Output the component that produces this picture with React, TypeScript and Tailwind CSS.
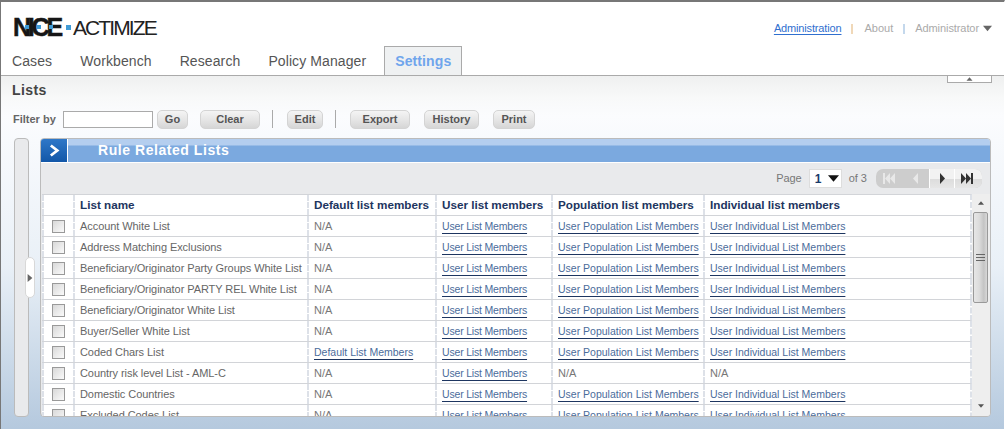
const tabs = ['Cases', 'Workbench', 'Research', 'Policy Manager'];

const toolbarButtons = [
  { label: 'Go', className: 'w-[31px] ml-[4px]' },
  { label: 'Clear', className: 'w-[60px] ml-[12px]' },
  { label: 'sep', className: 'ml-[12px]' },
  { label: 'Edit', className: 'w-[36px] ml-[14px]' },
  { label: 'sep', className: 'ml-[12px]' },
  { label: 'Export', className: 'w-[60px] ml-[14px]' },
  { label: 'History', className: 'w-[55px] ml-[14px]' },
  { label: 'Print', className: 'w-[42px] ml-[14px]' }
];

const rows = [
  { name: 'Account White List', def: false, pop: true, ind: true },
  { name: 'Address Matching Exclusions', def: false, pop: true, ind: true },
  { name: 'Beneficiary/Originator Party Groups White List', def: false, pop: true, ind: true },
  { name: 'Beneficiary/Originator PARTY REL White List', def: false, pop: true, ind: true },
  { name: 'Beneficiary/Originator White List', def: false, pop: true, ind: true },
  { name: 'Buyer/Seller White List', def: false, pop: true, ind: true },
  { name: 'Coded Chars List', def: true, pop: true, ind: true },
  { name: 'Country risk level List - AML-C', def: false, pop: false, ind: false },
  { name: 'Domestic Countries', def: false, pop: true, ind: true },
  { name: 'Excluded Codes List', def: false, pop: true, ind: true }
];

const grid = 'grid grid-cols-[31px_234px_128px_116px_152px_1fr] border-r-2 [border-right-style:dashed] border-r-[#dde1e8]';
const cell = 'border-l-2 border-dashed border-l-[#dde1e8] pl-[5px] flex items-center overflow-hidden whitespace-nowrap';

const Triangle = ({ dir, className }: { dir: 'up' | 'down' | 'right'; className: string }) => {
  const points = { up: '0,8 5,2 10,8', down: '0,2 10,2 5,8', right: '2,0 8,5 2,10' }[dir];
  return (
    <svg viewBox="0 0 10 10" className={className} fill="currentColor">
      <polygon points={points} />
    </svg>
  );
};

const PagerIcon = ({ d, width }: { d: string; width: number }) => (
  <svg viewBox={`0 0 ${width} 11`} width={width} height={11} fill="currentColor">
    <path d={d} />
  </svg>
);

const Member = ({ label, className = '' }: { label: string; className?: string }) => (
  <span className={`pt-[2px] text-[10.5px] text-[#4b6c9b] underline decoration-[#1d3560] underline-offset-[3px] ${className}`}>{label}</span>
);

const Na = () => <span className="text-[#777]">N/A</span>;

export default function App() {
  return (
    <div className="w-[1005px] h-[429px] flex flex-col overflow-hidden border-t-2 border-l border-r border-t-[#777] border-l-[#777] border-r-white font-['Liberation_Sans',Arial,sans-serif]">
      {/* Header */}
      <header className="h-[74px] shrink-0 bg-white border-b border-[#aaa] flex flex-col">
        <div className="h-[44px] flex justify-between pl-[12px] pr-[12px]">
          {/* Logo */}
          <div className="flex items-center h-[28px] mt-[11px]">
            <div className="relative text-[25px] leading-[25px] font-bold tracking-[-3.2px] text-[#161616] [-webkit-text-stroke:0.5px_#161616]">
              NICE
              <span className="absolute left-[12px] top-[10px] w-[4px] h-[4px] bg-[#3f9bd6]" />
              <span className="absolute left-[24px] top-[10px] w-[4px] h-[4px] bg-[#3f9bd6]" />
              <span className="absolute left-[36px] top-[10px] w-[4px] h-[4px] bg-[#3f9bd6]" />
            </div>
            <span className="w-[5px] h-[5px] ml-[6px] bg-[#3f9bd6]" />
            <span className="ml-[2px] text-[21px] leading-[25px] tracking-[-1.9px] text-[#222]">ACTIMIZE</span>
          </div>
          {/* User links */}
          <div className="flex items-center h-[14px] mt-[19.5px] text-[11px]">
            <span className="tracking-[-0.15px] text-[#2f6fcf] underline underline-offset-[2px]">Administration</span>
            <span className="w-[2px] h-[10px] ml-[10px] bg-[#f0d8b8]" />
            <span className="ml-[11px] text-[#aaa]">About</span>
            <span className="w-[2px] h-[10px] ml-[10px] bg-[#c4d8ec]" />
            <span className="ml-[10px] tracking-[-0.08px] text-[#aaa]">Administrator</span>
            <Triangle dir="down" className="w-[9px] h-[9px] ml-[4px] text-[#666]" />
          </div>
        </div>
        <nav className="h-[29px] flex items-end pl-[11px] text-[14px] tracking-[0.1px] text-[#555]">
          {tabs.map(tab => (
            <span key={tab} className="h-[29px] pt-[1px] mr-[28px] flex items-center">{tab}</span>
          ))}
          <span className="h-[29px] pt-[1px] -ml-[10.5px] pl-[10.5px] pr-[10px] flex items-center font-bold text-[#6fa5ec] bg-[#eff1f2] border-t border-l border-r border-[#aaa]">
            Settings
          </span>
        </nav>
      </header>

      {/* Page */}
      <main className="relative flex-1 pl-[11px] bg-[linear-gradient(#eff0f0_0px,#f8f9f9_22px,#fbfcfe_40px,#e9f0f7_190px,#b5c9de_352px)]">
        <button className="absolute right-[12px] top-0 w-[45px] h-[7px] bg-white border-b border-l border-r border-[#aaa] flex items-center justify-center">
          <Triangle dir="up" className="w-[9px] h-[6px] text-[#666]" />
        </button>

        <h1 className="h-[27px] pt-[6px] text-[14px] leading-[16px] font-bold tracking-[0.4px] text-[#444]">Lists</h1>

        {/* Toolbar */}
        <div className="h-[18px] mt-[7px] flex items-center pl-[1px]">
          <span className="w-[50px] text-[11px] font-bold text-[#666]">Filter by</span>
          <input className="w-[90px] h-[17px] bg-white border border-[#aaa] outline-none" />
          {toolbarButtons.map((b, i) =>
            b.label === 'sep' ? (
              <span key={i} className={`w-px h-[18px] bg-[#aaa] ${b.className}`} />
            ) : (
              <span
                key={i}
                className={`h-[19px] flex items-center justify-center rounded-[5px] border border-[#d4d4d4] bg-[linear-gradient(#f4f4f4,#e6e6e6_50%,#d6d6d6)] text-[11px] font-bold text-[#555] ${b.className}`}
              >
                {b.label}
              </span>
            )
          )}
        </div>

        {/* Workspace */}
        <div className="relative h-[279px] mt-[10px] ml-[2px] flex">
          <div className="w-[15px] shrink-0 rounded-[4px] border border-[#bbb] bg-[#e9eaec]" />
          <span className="absolute left-[11px] top-[119px] w-[10px] h-[41px] rounded-[5px] bg-white border border-[#d8d8d8] flex items-center justify-center">
            <Triangle dir="right" className="w-[8px] h-[8px] text-[#666]" />
          </span>

          {/* Panel */}
          <section className="w-[951px] ml-[11px] rounded-[4px] border border-[#bbb] bg-[#e9eaec] flex flex-col overflow-hidden">
            <div className="h-[24px] shrink-0 flex border-b border-white bg-[linear-gradient(#b4ceef_0px,#b4ceef_6px,#7ba9df_7px)]">
              <span className="w-[27px] h-[23px] flex items-center justify-center border-r border-white bg-[linear-gradient(#2f78c8,#1257a8)] text-white">
                <svg viewBox="0 0 12 14" className="w-[11px] h-[13px]" fill="none" stroke="currentColor" strokeWidth="3">
                  <path d="M2 1.5 9 7 2 12.5" />
                </svg>
              </span>
              <span className="ml-[30px] text-[14px] leading-[22px] font-bold tracking-[0.55px] text-white">Rule Related Lists</span>
            </div>

            {/* Pager */}
            <div className="h-[31px] shrink-0 flex items-center justify-end pr-[8px] text-[11px] text-[#777]">
              <span className="tracking-[-0.1px]">Page</span>
              <span className="w-[33px] h-[19px] ml-[7px] pl-[5px] pr-[2px] flex items-center justify-between bg-white border border-[#ddd] text-[12px] font-bold text-[#1a3a6a]">
                1
                <Triangle dir="down" className="w-[11px] h-[11px] text-[#111]" />
              </span>
              <span className="ml-[7px]">of 3</span>
              <div className="w-[106px] h-[19px] ml-[9px] flex rounded-[7px] overflow-hidden bg-[#cdcdcd]">
                <span className="w-[26px] flex items-center justify-center text-[#e8e8e8]">
                  <PagerIcon width={12} d="M0 0h2v11H0z M7 0v11L2 5.5z M12 0v11L7 5.5z" />
                </span>
                <span className="w-[27px] flex items-center justify-center text-[#e8e8e8]">
                  <PagerIcon width={5} d="M5 0v11L0 5.5z" />
                </span>
                <span className="w-[25px] flex items-center justify-center border-l border-white bg-[linear-gradient(#f2f2f2,#f2f2f2_50%,#dcdcdc_50%,#e6e6e6)] text-[#333]">
                  <PagerIcon width={5} d="M0 0l5 5.5L0 11z" />
                </span>
                <span className="flex-1 flex items-center justify-center pr-[3px] border-l border-white bg-[linear-gradient(#f2f2f2,#f2f2f2_50%,#dcdcdc_50%,#e6e6e6)] text-[#333]">
                  <PagerIcon width={12} d="M0 0l5 5.5L0 11z M5 0l5 5.5L5 11z M10 0h2v11h-2z" />
                </span>
              </div>
            </div>

            {/* Table */}
            <div className="flex-1 min-h-0 flex ml-[1px] overflow-hidden">
              <div className="w-[930px] bg-white text-[11px] text-[#666]">
                <div className={`${grid} h-[22px] border-b border-b-[#d2d4d8] border-t border-t-[#d2d4d8] font-bold text-[11.7px] text-[#1d3560]`}>
                  <div className={cell} />
                  <div className={cell}>List name</div>
                  <div className={cell}>Default list members</div>
                  <div className={cell}>User list members</div>
                  <div className={cell}>Population list members</div>
                  <div className={cell}>Individual list members</div>
                </div>
                {rows.map(row => (
                  <div key={row.name} className={`${grid} h-[21px] border-b border-b-[#d2d4d8]`}>
                    <div className={`${cell} justify-center !pl-0`}>
                      <span className="w-[13px] h-[13px] border border-[#999] bg-[linear-gradient(135deg,#d8d8d8,#fafafa)]" />
                    </div>
                    <div className={`${cell} tracking-[-0.07px]`}>{row.name}</div>
                    <div className={cell}>{row.def ? <Member label="Default List Members" /> : <Na />}</div>
                    <div className={cell}><Member label="User List Members" className="tracking-[-0.18px]" /></div>
                    <div className={cell}>{row.pop ? <Member label="User Population List Members" /> : <Na />}</div>
                    <div className={cell}>{row.ind ? <Member label="User Individual List Members" /> : <Na />}</div>
                  </div>
                ))}
              </div>

              {/* Scrollbar */}
              <div className="w-[18px] flex flex-col items-center bg-[#eeeeee]">
                <Triangle dir="up" className="w-[8px] h-[6px] mt-[6px] text-[#555]" />
                <div className="w-[15px] h-[91px] mt-[6px] -ml-[2px] flex flex-col items-center justify-center gap-[2px] rounded-[2px] border border-[#999] bg-[linear-gradient(90deg,#e6e6e6,#dcdcdc_40%,#c4c4c4_75%,#d8d8d8)]">
                  <span className="w-[9px] h-px bg-[#666]" />
                  <span className="w-[9px] h-px bg-[#666]" />
                  <span className="w-[9px] h-px bg-[#666]" />
                </div>
                <Triangle dir="down" className="w-[8px] h-[6px] mt-[100px] text-[#555]" />
              </div>
            </div>
          </section>
        </div>
      </main>
    </div>
  );
}
